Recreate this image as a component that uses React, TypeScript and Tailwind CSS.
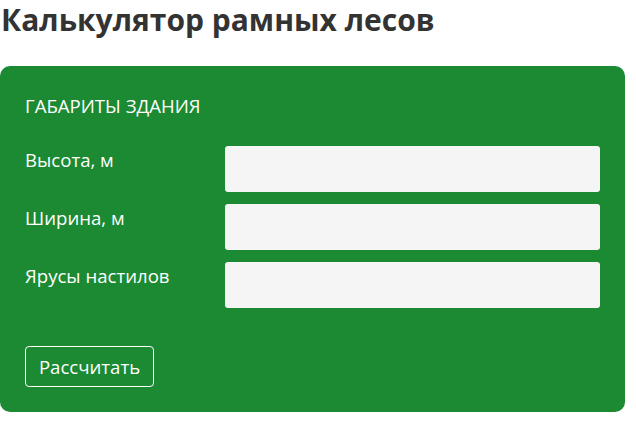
export default function App() {
  const fields = ["Высота, м", "Ширина, м", "Ярусы настилов"];
  return (
    <div className="w-[636px] h-[422px] bg-white font-['Open_Sans',sans-serif] overflow-hidden">
      <h1 className="text-[30px] leading-[40px] font-bold text-[#333333] pl-[1px]">
        Калькулятор рамных лесов
      </h1>
      <div className="mt-[26px] w-[625px] h-[346px] bg-[#1b8a32] rounded-[10px] px-[25px] pt-[28px]">
        <div className="text-[18.6px] leading-[24px] text-white">ГАБАРИТЫ ЗДАНИЯ</div>
        <div className="mt-[28px] flex flex-col gap-[12px]">
          {fields.map((f) => (
            <div key={f} className="flex items-start">
              <label className="w-[200px] text-[18.6px] leading-[24px] text-white pt-[2px]">{f}</label>
              <input className="w-[375px] h-[46px] bg-[#f5f5f5] rounded-[3px] outline-none" />
            </div>
          ))}
        </div>
        <button className="mt-[38px] h-[41px] w-[129px] justify-center flex items-center border border-white rounded-[4px] text-white text-[18.6px] leading-[24px]">
          Рассчитать
        </button>
      </div>
    </div>
  );
}
